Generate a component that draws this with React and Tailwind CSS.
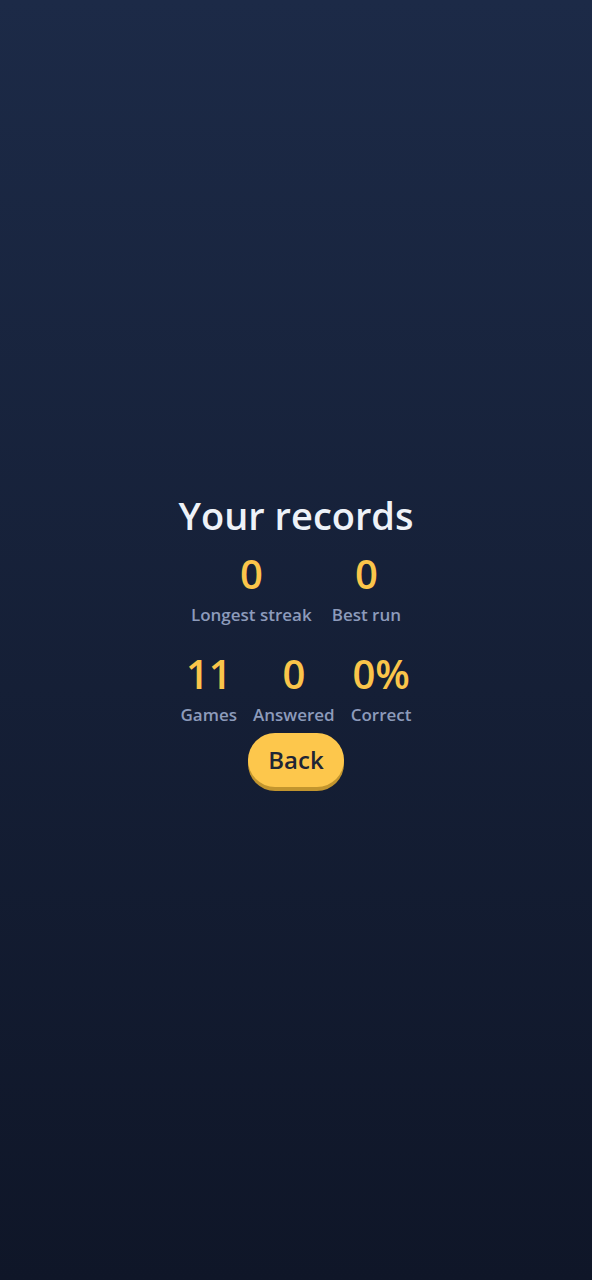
import React from 'react';

const Stat = ({ value, label }) => (
  <div className="flex flex-col items-center">
    <span className="text-[40px] leading-[58px] font-semibold text-[#fbc54a]">{value}</span>
    <span className="text-[17px] leading-[24px] font-semibold text-[#8d9bbb]">{label}</span>
  </div>
);

const App = () => {
  return (
    <div
      className="min-h-screen w-full flex flex-col items-center justify-center pb-[5px] bg-gradient-to-b from-[#1c2a47] to-[#0f1628]"
      style={{ fontFamily: '"Open Sans", sans-serif' }}
    >
      <h1 className="text-[38px] leading-[52px] font-semibold text-[#eef2f8]">Your records</h1>
      <div className="flex gap-5 mt-1">
        <Stat value="0" label="Longest streak" />
        <Stat value="0" label="Best run" />
      </div>
      <div className="flex gap-4 mt-[18px]">
        <Stat value="11" label="Games" />
        <Stat value="0" label="Answered" />
        <Stat value="0%" label="Correct" />
      </div>
      <button className="mt-1.5 h-[54px] px-5 rounded-full bg-[#fdc74c] text-[#1f2535] text-[24px] font-semibold shadow-[0_4px_0_#c2952e]">
        Back
      </button>
    </div>
  );
};

export default App;
